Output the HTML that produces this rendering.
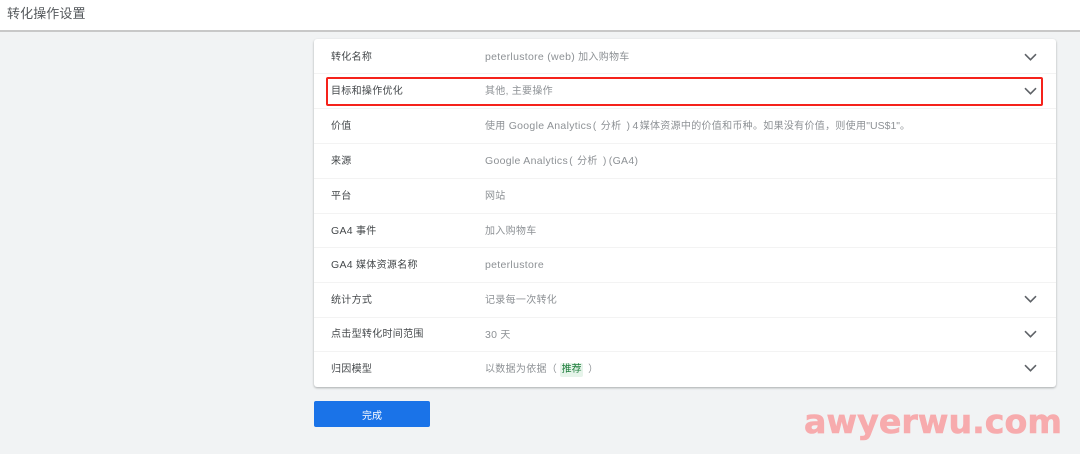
<!DOCTYPE html>
<html lang="zh">
<head>
<meta charset="utf-8">
<style>
html,body{margin:0;padding:0;}
body{width:1080px;height:454px;position:relative;overflow:hidden;background:#f1f3f4;font-family:"Liberation Sans","Noto Sans CJK SC",sans-serif;}
.top{position:absolute;left:0;top:0;width:1080px;height:30px;background:#fff;border-bottom:2px solid #c8c8c8;}
.title{position:absolute;left:7px;top:5px;font-size:13px;line-height:18px;color:#55595c;letter-spacing:.1px;white-space:nowrap;}
.card{position:absolute;left:314px;top:39px;width:742px;height:348px;background:#fff;border-radius:3px;box-shadow:0 1px 2px rgba(60,64,67,.4);}
.line{position:absolute;left:0;width:742px;height:1px;background:#f3f3f3;}
.l{position:absolute;left:331px;font-size:10px;line-height:14px;color:#44484b;white-space:nowrap;letter-spacing:.3px;}
.v{position:absolute;left:485px;font-size:10px;line-height:14px;color:#8d9195;white-space:nowrap;letter-spacing:.3px;}
.e{font-size:10.5px;letter-spacing:.3px;}
.l .e{letter-spacing:.3px;}
.p{display:inline-block;text-align:center;}
.red{position:absolute;left:326px;top:77px;width:713px;height:25px;border:2px solid #f5221b;border-radius:2px;}
.chev{position:absolute;left:1024px;width:13px;height:8px;}
.tag{display:inline-block;background:#e6f4ea;color:#1e7e3c;padding:0 1.5px;line-height:14px;border-radius:2px;margin:0 5px 0 3px;letter-spacing:0;}
.btn{position:absolute;left:314px;top:401px;width:116px;height:26px;background:#1a73e8;border-radius:2px;color:#fff;font-size:10px;line-height:32px;text-align:center;}
.wm{position:absolute;left:800px;top:405px;}
</style>
</head>
<body>
<div class="top"></div>
<div class="title">转化操作设置</div>
<div class="card">
<div class="line" style="top:34px"></div>
<div class="line" style="top:69px"></div>
<div class="line" style="top:104px"></div>
<div class="line" style="top:139px"></div>
<div class="line" style="top:174px"></div>
<div class="line" style="top:208px"></div>
<div class="line" style="top:243px"></div>
<div class="line" style="top:278px"></div>
<div class="line" style="top:312px"></div>
</div>

<div class="l" style="top:51px">转化名称</div><div class="v" style="top:50px"><span class="e">peterlustore (web)</span> 加入购物车</div>
<div class="l" style="top:85px">目标和操作优化</div><div class="v" style="top:85px">其他, 主要操作</div>
<div class="l" style="top:120px">价值</div><div class="v" style="top:119px">使用 <span class="e">Google Analytics</span><span class="p" style="width:6px">(</span>&nbsp;分析&nbsp;<span class="p" style="width:8px">)</span><span class="e">4</span><span style="margin-left:-2px"> 媒体资源中的价值和币种。如果没有价值，则使用</span><span class="e" style="letter-spacing:0">"US$1"</span>。</div>
<div class="l" style="top:155px">来源</div><div class="v" style="top:154px"><span class="e">Google Analytics</span><span class="p" style="width:6px">(</span>&nbsp;分析&nbsp;<span class="p" style="width:8px">)</span><span class="e">(GA4)</span></div>
<div class="l" style="top:190px">平台</div><div class="v" style="top:190px">网站</div>
<div class="l" style="top:224px"><span class="e">GA4</span> 事件</div><div class="v" style="top:225px">加入购物车</div>
<div class="l" style="top:258px"><span class="e">GA4</span> 媒体资源名称</div><div class="v" style="top:258px"><span class="e">peterlustore</span></div>
<div class="l" style="top:294px">统计方式</div><div class="v" style="top:294px">记录每一次转化</div>
<div class="l" style="top:328px">点击型转化时间范围</div><div class="v" style="top:328px"><span class="e">30</span> 天</div>
<div class="l" style="top:363px">归因模型</div><div class="v" style="top:363px">以数据为依据（<span class="tag">推荐</span>）</div>

<div class="red"></div>

<svg class="chev" style="top:53px" viewBox="0 0 13 8"><path d="M1 1.2L6.5 6.7L12 1.2" fill="none" stroke="#5f6368" stroke-width="1.6"/></svg>
<svg class="chev" style="top:87px" viewBox="0 0 13 8"><path d="M1 1.2L6.5 6.7L12 1.2" fill="none" stroke="#5f6368" stroke-width="1.6"/></svg>
<svg class="chev" style="top:295px" viewBox="0 0 13 8"><path d="M1 1.2L6.5 6.7L12 1.2" fill="none" stroke="#5f6368" stroke-width="1.6"/></svg>
<svg class="chev" style="top:330px" viewBox="0 0 13 8"><path d="M1 1.2L6.5 6.7L12 1.2" fill="none" stroke="#5f6368" stroke-width="1.6"/></svg>
<svg class="chev" style="top:364px" viewBox="0 0 13 8"><path d="M1 1.2L6.5 6.7L12 1.2" fill="none" stroke="#5f6368" stroke-width="1.6"/></svg>

<div class="btn">完成</div>

<svg class="wm" width="270" height="45" viewBox="0 0 270 45">
<text x="4" y="28" font-family="'DejaVu Sans',sans-serif" font-weight="700" font-size="33" fill="#f7abad" stroke="#f7abad" stroke-width=".6" textLength="258" lengthAdjust="spacingAndGlyphs">awyerwu.com</text>
</svg>
</body>
</html>
